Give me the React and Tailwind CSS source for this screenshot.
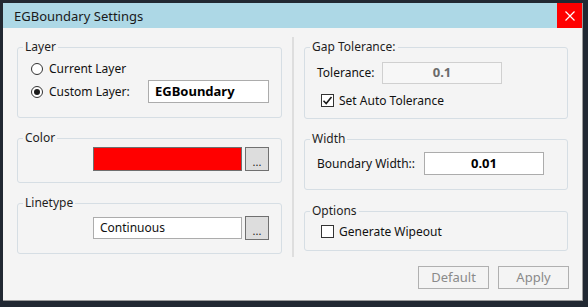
import React from 'react';

const font = { fontFamily: '"Noto Sans", "Open Sans", sans-serif' };

const Group = ({ label, className, children }) => (
  <div className={`relative rounded-[3px] border border-[#d6dee4] ${className}`}>
    <span className="absolute -top-[9px] left-[5px] bg-[#f4f4f4] px-[2px] text-[12px] leading-[16px] text-[#1e1e1e]">
      {label}
    </span>
    {children}
  </div>
);

const Radio = ({ checked }) => (
  <span className="flex h-[12px] w-[12px] items-center justify-center rounded-full border border-[#333] bg-white">
    {checked && <span className="h-[6px] w-[6px] rounded-full bg-[#1a1a1a]" />}
  </span>
);

const Checkbox = ({ checked }) => (
  <span className="flex h-[13px] w-[13px] items-center justify-center border border-[#333] bg-white">
    {checked && (
      <svg width="11" height="11" viewBox="0 0 11 11">
        <path d="M1.5 5.8 L4.2 8.5 L9.5 2" fill="none" stroke="#1a1a1a" strokeWidth="1.6" />
      </svg>
    )}
  </span>
);

const DotsButton = () => (
  <button className="flex h-[24px] w-[24px] items-end justify-center border border-[#707070] bg-[#dddddd] pb-[3px] text-[11px] leading-[11px] text-[#222]">
    ...
  </button>
);

export default function App() {
  return (
    <div className="h-[307px] w-[588px] overflow-hidden bg-[#212832] pl-[3px] pt-[3px]" style={font}>
      <div className="flex h-[298px] w-[580px] flex-col border-r border-b border-[#9a9a9a] bg-[#f4f4f4]">
        {/* title bar */}
        <div className="flex h-[25px] shrink-0 items-center justify-between bg-[#add8e6]">
          <span className="pl-[11px] text-[13px] leading-[18px] text-[#1a1a1a]">EGBoundary Settings</span>
          <div className="flex h-[25px] w-[25px] items-center justify-center bg-[#ff0000]">
            <svg width="10" height="10" viewBox="0 0 10 10">
              <path d="M0.5 0.5 L9.5 9.5 M9.5 0.5 L0.5 9.5" stroke="#fff" strokeWidth="1.2" />
            </svg>
          </div>
        </div>

        {/* body */}
        <div className="flex flex-1 pl-[14px] pt-[19px] text-[12px] text-[#111]">
          {/* left column */}
          <div className="flex w-[265px] flex-col">
            <Group label="Layer" className="h-[71px] pl-[13px] pt-[13px]">
              <div className="flex h-[16px] items-center gap-[6px]">
                <Radio />
                <span>Current Layer</span>
              </div>
              <div className="mt-[3px] flex h-[23px] items-center">
                <Radio checked />
                <span className="ml-[6px] w-[99px]">Custom Layer:</span>
                <div className="flex h-[23px] w-[121px] items-center border border-[#acacac] bg-white pl-[6px] text-[13px] font-bold text-black">
                  EGBoundary
                </div>
              </div>
            </Group>

            <Group label="Color" className="mt-[20px] flex h-[45px] justify-end gap-[3px] pr-[12px] pt-[8px]">
              <div className="h-[24px] w-[149px] border border-[#6f6f6f] bg-[#ff0000]" />
              <DotsButton />
            </Group>

            <Group label="Linetype" className="mt-[20px] flex h-[51px] items-start justify-end gap-[3px] pr-[12px] pt-[12px]">
              <div className="mt-[1px] flex h-[22px] w-[149px] items-center border border-[#acacac] bg-white pl-[6px] text-[12px]">
                Continuous
              </div>
              <DotsButton />
            </Group>
          </div>

          {/* separator */}
          <div className="ml-[10px] mt-[-10px] h-[220px] w-[2px] bg-[#dedede]" />

          {/* right column */}
          <div className="ml-[10px] flex w-[265px] flex-col">
            <Group label="Gap Tolerance:" className="mr-[1px] h-[72px] pl-[12px] pt-[14px]">
              <div className="flex h-[22px] items-center">
                <span className="w-[65px]">Tolerance:</span>
                <div className="flex h-[22px] w-[120px] items-center justify-center border border-[#d0d0d0] bg-[#f7f7f7] text-[13px] font-bold text-[#6b6b6b]">
                  0.1
                </div>
              </div>
              <div className="mt-[10px] flex h-[13px] items-center gap-[5px] pl-[4px]">
                <Checkbox checked />
                <span>Set Auto Tolerance</span>
              </div>
            </Group>

            <Group label="Width" className="mr-[1px] mt-[20px] h-[51px] pl-[12px] pt-[12px]">
              <div className="flex h-[23px] items-center">
                <span className="w-[107px]">Boundary Width::</span>
                <div className="flex h-[23px] w-[120px] items-center justify-center border border-[#acacac] bg-white text-[13px] font-bold text-black">
                  0.01
                </div>
              </div>
            </Group>

            <Group label="Options" className="mr-[1px] mt-[21px] h-[40px] pl-[16px] pt-[13px]">
              <div className="flex h-[13px] items-center gap-[5px]">
                <Checkbox />
                <span>Generate Wipeout</span>
              </div>
            </Group>

            <div className="mt-[15px] flex justify-end gap-[9px]">
              <button className="h-[23px] w-[71px] border border-[#b0b0b0] bg-[#f4f4f4] text-[13px] text-[#8a8a8a]">
                Default
              </button>
              <button className="h-[23px] w-[71px] border border-[#b0b0b0] bg-[#f4f4f4] text-[13px] text-[#8a8a8a]">
                Apply
              </button>
            </div>
          </div>
        </div>
      </div>
    </div>
  );
}
